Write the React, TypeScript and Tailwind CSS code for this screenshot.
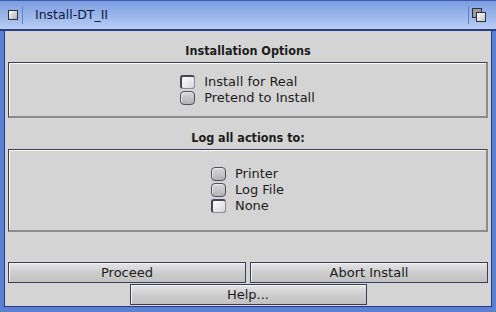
const font = { fontFamily: '"DejaVu Sans", Verdana, sans-serif' };
const heading = { fontFamily: '"DejaVu Sans Condensed", "DejaVu Sans", sans-serif' };

type Opt = { label: string; active?: boolean };

const installOpts: Opt[] = [
  { label: "Install for Real", active: true },
  { label: "Pretend to Install" },
];

const logOpts: Opt[] = [
  { label: "Printer" },
  { label: "Log File" },
  { label: "None", active: true },
];

const Check = ({ active }: { active?: boolean }) =>
  active ? (
    <span className="block w-[15px] h-[14px] rounded-[3px] border border-[#8a8a98] border-t-2 border-l-2 border-t-[#44445c] border-l-[#44445c] bg-gradient-to-br from-[#ffffff] to-[#d6d6d6]" />
  ) : (
    <span className="block w-[15px] h-[14px] rounded-[4px] border border-[#50505e] bg-gradient-to-b from-[#d8d8d8] to-[#b2b2b2] shadow-[inset_1px_1px_0_#e8e8e8]" />
  );

const Group = ({ opts }: { opts: Opt[] }) => (
  <div className="flex flex-col items-start gap-[2px]">
    {opts.map((o) => (
      <div key={o.label} className="flex items-center h-[14px]">
        <Check active={o.active} />
        <span className="ml-[9px] text-[13px] leading-[14px] text-[#1c1c1c]">{o.label}</span>
      </div>
    ))}
  </div>
);

const Box = ({ children, h }: { children: React.ReactNode; h: string }) => (
  <div
    className={`${h} border-t border-l border-[#3c3c58] border-b-2 border-r-2 border-b-[#8c8c8c] border-r-[#8c8c8c] shadow-[inset_1px_1px_0_#ffffff] flex items-center justify-center`}
  >
    {children}
  </div>
);

const Btn = ({ label, className = "" }: { label: string; className?: string }) => (
  <button
    className={`h-[21px] border border-[#3c3c58] bg-gradient-to-b from-[#e6e6e6] via-[#cdcdcd] to-[#c2c2c2] shadow-[inset_1px_1px_0_#f4f4f4] text-[13px] leading-none text-[#1c1c1c] ${className}`}
  >
    {label}
  </button>
);

export default function App() {
  return (
    <div className="w-[496px] h-[312px] flex flex-col bg-[#6085d8]" style={font}>
      {/* title bar */}
      <div className="h-[31px] shrink-0 flex items-center border-t border-[#3a5cb0] border-b-2 border-b-[#283c84] bg-gradient-to-b from-[#7b9ce0] to-[#b8cdf4]">
        <span className="ml-[8px] w-[10px] h-[10px] border border-[#303040] bg-gradient-to-br from-[#ffffff] to-[#b0b0b0]" />
        <span className="ml-[4px] w-px h-[18px] bg-[#6a80b8]" />
        <span className="ml-[12px] text-[12.5px] text-[#10183a]">Install-DT_II</span>
        <span className="ml-auto w-px h-[18px] bg-[#6a80b8]" />
        <span className="relative ml-[3px] mr-[10px] w-[14px] h-[14px]">
          <span className="absolute left-0 top-0 w-[10px] h-[10px] border border-[#303040] bg-[#9a9a9a]" />
          <span className="absolute left-[4px] top-[4px] w-[10px] h-[10px] border border-[#303040] bg-gradient-to-br from-[#ffffff] to-[#c4c4c4]" />
        </span>
      </div>
      {/* body */}
      <div className="flex-1 flex border-x-[4px] border-b-[5px] border-[#5c80d4]">
        <div className="flex-1 flex flex-col bg-[#d4d4d4] border-x border-b border-[#223a80] px-[3px]">
          <div
            className="h-[31px] pt-[12px] text-center text-[12.5px] font-bold leading-[16px] text-[#1c1c1c]"
            style={heading}
          >
            Installation Options
          </div>
          <Box h="h-[56px]">
            <Group opts={installOpts} />
          </Box>
          <div
            className="h-[31px] pt-[12px] text-center text-[12.5px] font-bold leading-[16px] text-[#1c1c1c]"
            style={heading}
          >
            Log all actions to:
          </div>
          <Box h="h-[83px]">
            <Group opts={logOpts} />
          </Box>
          <div className="mt-[30px] flex gap-[4px]">
            <Btn label="Proceed" className="flex-1" />
            <Btn label="Abort Install" className="flex-1" />
          </div>
          <div className="mt-px flex justify-center">
            <Btn label="Help..." className="w-[237px]" />
          </div>
        </div>
      </div>
    </div>
  );
}
